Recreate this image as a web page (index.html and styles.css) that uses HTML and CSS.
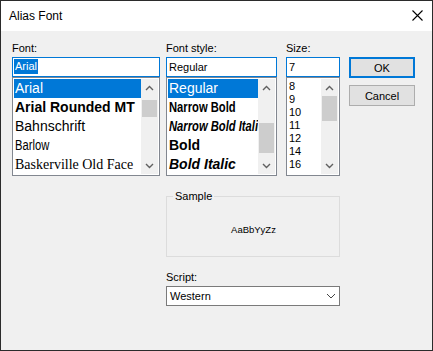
FILE: index.html
```html
<!DOCTYPE html>
<html lang="en">

<head>
    <meta charset="UTF-8">
    <title>Alias Font</title>
    <link rel="stylesheet" href="styles.css">
</head>

<body>

    <div class="window">
        <!-- Title bar -->
        <div class="titlebar">
            <span class="title">Alias Font</span>
            <svg class="close" width="11" height="11" viewBox="0 0 11 11">
                <path d="M0.5 0.5 L10.5 10.5 M10.5 0.5 L0.5 10.5" stroke="#000" stroke-width="1.1" fill="none"/>
            </svg>
        </div>

        <div class="client">
            <div class="top-row">
                <!-- Font -->
                <div class="col col-font">
                    <label class="field-label">Font:</label>
                    <div class="edit"><span class="sel">Arial</span></div>
                    <div class="listbox">
                        <ul class="items">
                            <li class="selected f-arial">Arial</li>
                            <li class="f-rounded">Arial Rounded MT</li>
                            <li class="f-bahn">Bahnschrift</li>
                            <li class="f-barlow"><span class="narrow">Barlow</span></li>
                            <li class="f-bask">Baskerville Old Face</li>
                        </ul>
                        <div class="scrollbar">
                            <div class="sb-arrow"><svg width="9" height="6" viewBox="0 0 9 6"><path d="M1 5 L4.5 1.5 L8 5" class="chev"/></svg></div>
                            <div class="sb-track"><div class="sb-thumb" style="margin-top: 4px; height: 17px;"></div></div>
                            <div class="sb-arrow"><svg width="9" height="6" viewBox="0 0 9 6"><path d="M1 1 L4.5 4.5 L8 1" class="chev"/></svg></div>
                        </div>
                    </div>
                </div>

                <!-- Font style -->
                <div class="col col-style">
                    <label class="field-label">Font style:</label>
                    <div class="edit">Regular</div>
                    <div class="listbox">
                        <ul class="items">
                            <li class="selected f-arial">Regular</li>
                            <li class="f-narrow-bold"><span class="narrow">Narrow Bold</span></li>
                            <li class="f-narrow-bold-italic"><span class="narrow">Narrow Bold Italic</span></li>
                            <li class="f-bold">Bold</li>
                            <li class="f-bold-italic">Bold Italic</li>
                        </ul>
                        <div class="scrollbar">
                            <div class="sb-arrow"><svg width="9" height="6" viewBox="0 0 9 6"><path d="M1 5 L4.5 1.5 L8 5" class="chev"/></svg></div>
                            <div class="sb-track"><div class="sb-thumb" style="margin-top: 27px; height: 30px;"></div></div>
                            <div class="sb-arrow"><svg width="9" height="6" viewBox="0 0 9 6"><path d="M1 1 L4.5 4.5 L8 1" class="chev"/></svg></div>
                        </div>
                    </div>
                </div>

                <!-- Size -->
                <div class="col col-size">
                    <label class="field-label">Size:</label>
                    <div class="edit">7</div>
                    <div class="listbox">
                        <ul class="items sizes">
                            <li>8</li>
                            <li>9</li>
                            <li>10</li>
                            <li>11</li>
                            <li>12</li>
                            <li>14</li>
                            <li>16</li>
                        </ul>
                        <div class="scrollbar">
                            <div class="sb-arrow"><svg width="9" height="6" viewBox="0 0 9 6"><path d="M1 5 L4.5 1.5 L8 5" class="chev"/></svg></div>
                            <div class="sb-track"><div class="sb-thumb" style="margin-top: 0; height: 25px;"></div></div>
                            <div class="sb-arrow"><svg width="9" height="6" viewBox="0 0 9 6"><path d="M1 1 L4.5 4.5 L8 1" class="chev"/></svg></div>
                        </div>
                    </div>
                </div>

                <!-- Buttons -->
                <div class="buttons">
                    <button class="btn btn-default">OK</button>
                    <button class="btn">Cancel</button>
                </div>
            </div>

            <div class="lower">
                <fieldset class="sample">
                    <legend>Sample</legend>
                    <div class="sample-text">AaBbYyZz</div>
                </fieldset>

                <label class="field-label script-label">Script:</label>
                <div class="combo">
                    <span>Western</span>
                    <svg width="10" height="6" viewBox="0 0 10 6"><path d="M1 1 L5 5 L9 1" class="chev-thin"/></svg>
                </div>
            </div>
        </div>
    </div>

</body>

</html>
```

FILE: styles.css
```css
/* Reset */
* {
    box-sizing: border-box;
    margin: 0;
    padding: 0;
}

body {
    background: #f0f0f0;
    font-family: 'Liberation Sans', Arial, sans-serif;
    font-size: 11px;
    color: #000;
}

/* Dialog frame */
.window {
    width: 433px;
    height: 351px;
    border: 1px solid #2b2b2b;
    display: flex;
    flex-direction: column;
    background: #f0f0f0;
}

.titlebar {
    height: 30px;
    background: #fff;
    display: flex;
    align-items: center;
    justify-content: space-between;
    padding: 0 9px 1px 8px;
}

.title {
    font-size: 12px;
}

.close {
    display: block;
}

.client {
    flex: 1;
    padding: 10px 0 0 11px;
}

/* Top row: three columns + buttons */
.top-row {
    display: flex;
    align-items: flex-start;
}

.col-font {
    width: 148px;
}

.col-style {
    width: 111px;
    margin-left: 6px;
}

.col-size {
    width: 54px;
    margin-left: 9px;
}

.field-label {
    display: block;
    height: 15px;
    line-height: 15px;
    margin-bottom: 1px;
}

.edit {
    height: 20px;
    border: 1px solid #0078d7;
    background: #fff;
    padding: 0 2px;
    line-height: 18px;
    white-space: nowrap;
}

.sel {
    display: inline-block;
    line-height: 15px;
    margin-left: -1px;
    padding: 0 1px;
    background: #0078d7;
    color: #fff;
    vertical-align: 1px;
}

/* List boxes */
.listbox {
    height: 99px;
    border: 1px solid #828790;
    background: #fff;
    padding: 1px;
    display: flex;
}

.items {
    flex: 1;
    min-width: 0;
    list-style: none;
    overflow: hidden;
}

.items li {
    height: 19px;
    line-height: 19px;
    padding-left: 1px;
    white-space: nowrap;
    overflow: hidden;
    font-size: 14px;
}

.items li.selected {
    background: #0078d7;
    color: #fff;
}

.items.sizes {
    padding-top: 1px;
}

.items.sizes li {
    height: 13px;
    line-height: 13px;
    font-size: 11px;
}

/* condensed faces are not installed, squeeze the regular ones */
.narrow {
    display: inline-block;
    transform: scaleX(0.8);
    transform-origin: left center;
}

.f-arial {
    font-family: 'Liberation Sans', Arial, sans-serif;
}

.f-rounded {
    font-weight: bold;
}

.f-bahn {
    font-size: 14px;
}

.items li.f-barlow {
    font-size: 14px;
}

.items li.f-bask {
    font-family: 'Liberation Serif', serif;
    font-size: 14px;
}

.f-narrow-bold,
.f-narrow-bold-italic {
    font-weight: bold;
}

.f-narrow-bold-italic {
    font-style: italic;
}

.f-bold {
    font-weight: bold;
}

.f-bold-italic {
    font-weight: bold;
    font-style: italic;
}

/* Scroll bars */
.scrollbar {
    width: 17px;
    flex-shrink: 0;
    background: #f0f0f0;
    display: flex;
    flex-direction: column;
}

.sb-arrow {
    height: 17px;
    display: flex;
    align-items: center;
    justify-content: center;
}

.sb-arrow svg {
    display: block;
}

.sb-track {
    flex: 1;
    padding: 0 1px;
}

.sb-thumb {
    background: #cdcdcd;
}

.chev {
    fill: none;
    stroke: #606060;
    stroke-width: 1.4;
}

.chev-thin {
    fill: none;
    stroke: #444;
    stroke-width: 1;
}

/* Buttons */
.buttons {
    margin-left: 9px;
    margin-top: 16px;
    display: flex;
    flex-direction: column;
    gap: 7px;
}

.btn {
    width: 66px;
    height: 21px;
    background: #e1e1e1;
    border: 1px solid #adadad;
    font-family: 'Liberation Sans', Arial, sans-serif;
    font-size: 11px;
    color: #000;
}

.btn-default {
    border: 2px solid #0078d7;
}

/* Sample + script */
.lower {
    margin-left: 154px;
    margin-top: 13px;
    width: 174px;
}

.sample {
    height: 68px;
    border: 1px solid #dcdcdc;
    min-inline-size: 0;
}

.sample legend {
    margin-left: 6px;
    padding: 0 2px;
    line-height: 14px;
}

.sample-text {
    height: 53px;
    display: flex;
    align-items: center;
    justify-content: center;
    font-size: 9.5px;
    padding-left: 1px;
}

.script-label {
    margin-top: 13px;
}

.combo {
    height: 20px;
    border: 1px solid #7a7a7a;
    background: #fff;
    display: flex;
    align-items: center;
    justify-content: space-between;
    padding: 0 3px 0 3px;
}
```
